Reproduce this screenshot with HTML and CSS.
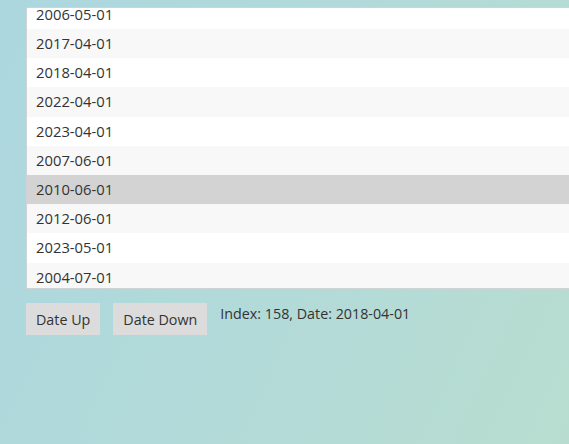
FILE: index.html
```html
<!DOCTYPE html>
<html lang="en">
<head>
<meta charset="utf-8">
<title>Date list</title>
<link rel="stylesheet" href="styles.css">
</head>
<body>
<main class="app">
  <div class="list">
    <ul class="rows">
      <li class="row">2006-05-01</li>
      <li class="row alt">2017-04-01</li>
      <li class="row">2018-04-01</li>
      <li class="row alt">2022-04-01</li>
      <li class="row">2023-04-01</li>
      <li class="row alt">2007-06-01</li>
      <li class="row selected">2010-06-01</li>
      <li class="row alt">2012-06-01</li>
      <li class="row">2023-05-01</li>
      <li class="row alt">2004-07-01</li>
      <li class="row">2011-07-01</li>
    </ul>
  </div>
  <div class="controls">
    <button class="btn" type="button">Date Up</button>
    <button class="btn" type="button">Date Down</button>
    <span class="status">Index: 158, Date: 2018-04-01</span>
  </div>
</main>
</body>
</html>
```

FILE: styles.css
```css
html {
  height: 100%;
  overflow: hidden;
  background: linear-gradient(115deg, #acd7df 0%, #b2dad9 50%, #b8ddd0 100%);
}

body {
  margin: 0;
  min-height: 100%;
  font-family: "Open Sans", "Noto Sans", sans-serif;
  font-size: 14.3px;
  color: #333;
}

.app {
  display: flex;
  flex-direction: column;
  padding: 7px 0 0 26px;
}

.list {
  width: 620px;
  height: 280px;
  overflow: hidden;
  background: #fff;
  border: 1px solid #cfd3d3;
}

.rows {
  list-style: none;
  margin: -8.2px 0 0 0;
  padding: 0;
  font-size: 14.8px;
}

.row {
  height: 29.2px;
  line-height: 29.2px;
  padding-left: 9px;
  background: #fff;
}

.row.alt {
  background: #f8f8f8;
}

.row.selected {
  background: #d3d3d3;
}

.controls {
  display: flex;
  align-items: flex-start;
  gap: 13px;
  margin-top: 14px;
}

.btn {
  height: 32px;
  padding: 0 10px;
  border: none;
  background: #dcdcdc;
  color: #333;
  font: inherit;
}

.status {
  line-height: 22px;
}
```
